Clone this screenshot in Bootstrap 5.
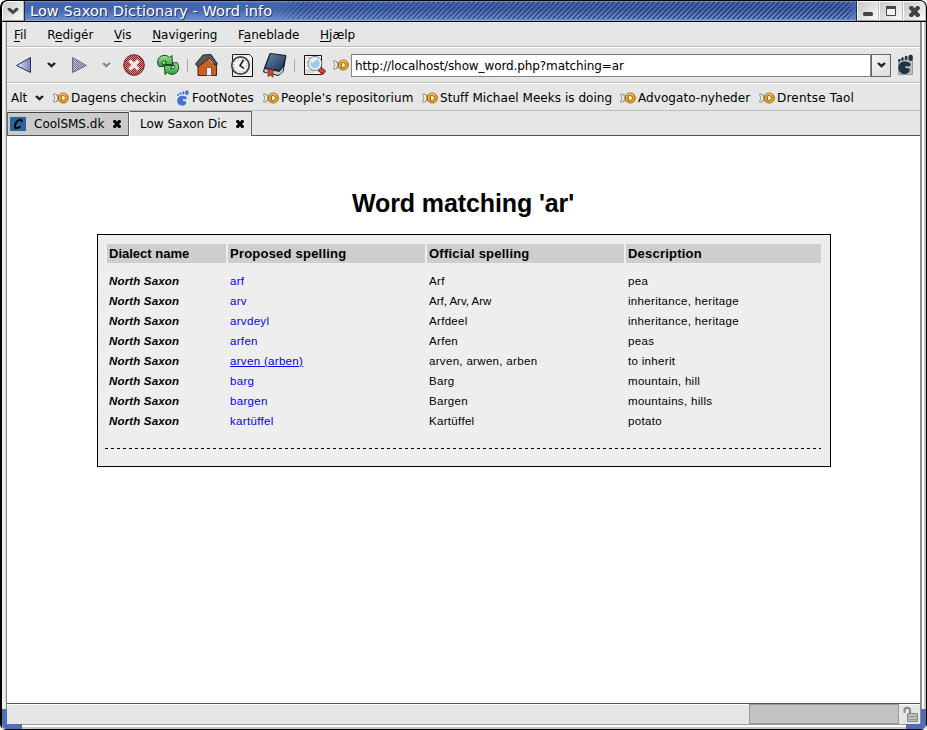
<!DOCTYPE html>
<html lang="da">
<head>
<meta charset="utf-8">
<title>Low Saxon Dictionary - Word info</title>
<link rel="stylesheet" href="https://cdn.jsdelivr.net/npm/bootstrap@5.3.0/dist/css/bootstrap.min.css">
<style>
body{width:927px;height:730px;overflow:hidden;background:#fff;font:12px/16px "DejaVu Sans",sans-serif;color:#000}
svg{display:block;flex:none}
.win{width:927px;height:730px;background:#000;border-radius:7px 7px 6px 6px;padding:1px 1px 1px 2px;overflow:hidden}
.titlebar{height:21px}
.wbtn{width:22px;height:20px;background:linear-gradient(135deg,#c9c9c9,#fafafa);border:1px solid #fff;border-right-color:#bbb;border-bottom-color:#999;flex:none}
.wbtn-menu{border-top-left-radius:6px}
.wbtn-max{width:24px}
.wbtn-close{width:23px;border-top-right-radius:6px}
.caption-area{background:linear-gradient(#7795d2 0,#4466b0 2px,#4466b0 9px,#6f8fcb 19px,#a5bce6 20px);height:20px;border-left:1px solid #1c2b50;border-right:1px solid #1c2b50}
.caption-text{font-size:14.5px;line-height:20px;color:#fff;text-shadow:1px 1px 0 #22365f;padding-left:5px;width:248px;letter-spacing:.07px}
.hatch{height:17px;margin-top:1px;background:repeating-linear-gradient(135deg,rgba(30,50,95,.75) 0,rgba(30,50,95,.75) 1px,transparent 1.6px,transparent 3.54px);-webkit-mask-image:linear-gradient(90deg,transparent,#000 30px,#000 calc(100% - 8px),transparent)}
.frame{height:707px;background:linear-gradient(90deg,#e6e6e6,#f6f6f6 2px,#ccc 4px);padding:0 5px 5px 4px;position:relative}
.inner{height:703px;background:#e6e6e6;border-left:1px solid #888;border-right:1px solid #888}
.edge-r{position:absolute;right:0;top:0;width:5px;height:100%;background:linear-gradient(90deg,#999 0 1px,#fff 1px 3px,#c4c4c4 3px 5px)}
.edge-b{position:absolute;left:0;right:0;bottom:0;height:5px;background:linear-gradient(#999 0 1px,#fff 1px 3px,#c4c4c4 3px 5px)}
.grip{position:absolute;bottom:0;width:20px;height:20px;border:solid #4c6fb8;border-width:0 0 5px 5px}
.grip-l{left:0;border-bottom-left-radius:5px}
.grip-r{right:0;border-width:0 5px 5px 0;border-bottom-right-radius:5px}
.menubar{height:25px;gap:20.6px;padding:2px 0 0 7px;border-bottom:1px solid #bdbdbd}
.menubar u{text-underline-offset:2px}
.tools{height:36px;border-top:1px solid #fff;border-bottom:1px solid #bdbdbd;padding-left:7px}
.addr{width:520px;height:23px;background:#fff;border:1px solid #858585;border-top-color:#777;padding:0 3px;letter-spacing:-.1px;line-height:22px}
.drop{width:20px;height:23px;border:1px solid #666;background:linear-gradient(135deg,#f4f4f4,#ddd);flex:none}
.marks{height:28px;border-top:1px solid #fff;border-bottom:1px solid #bdbdbd;padding:2px 0 0 4px;white-space:nowrap}
.mk{display:flex;align-items:center;gap:2px;flex:none}
.mk-alt{width:42px;gap:8px}
.mk-a{width:122px}.mk-b{width:88px;letter-spacing:.15px}.mk-c{width:159px;letter-spacing:.15px}.mk-d{width:198px;letter-spacing:.04px}.mk-e{width:139px;letter-spacing:.06px}.mk-f{letter-spacing:.22px}
.tabs{height:25px;border-bottom:1px solid #555}
.tb{border:1px solid #666;border-bottom:0;white-space:nowrap}
.tb-off{width:122px;height:23px;background:#cbcbcb;border-top-color:#444;padding-left:2px}
.tb-on{width:123px;height:25px;background:#e6e6e6;border-left:1px solid #fff;margin-bottom:-1px;padding-left:10px}
.page{height:568px;background:#fff;border-bottom:1px solid #555;font-family:"Liberation Sans",Arial,sans-serif;padding-top:50px}
.page h1{font:bold 25px/34px "Liberation Sans",Arial,sans-serif;letter-spacing:-.1px;margin:0 0 14px;padding-right:1px;height:34px}
.words{width:734px;height:233px;margin-left:90px;background:#eee;border:1px solid #000;padding:9px 9px 0 7px}
.wrow{display:grid;grid-template-columns:119px 197px 197px 195px;gap:2px;margin-left:2px;height:20px;font-size:11.5px;line-height:20px;letter-spacing:.32px}
.wrow>*{padding-left:2px}
.wrow em{font-weight:bold;letter-spacing:.16px}
.wrow .tight{letter-spacing:0}
.whead{height:19px;font-size:13px;line-height:19px;letter-spacing:.22px;font-weight:bold;margin-bottom:8px}
.whead>*{background:#cecece}
.wrow a{color:#00f;text-decoration:none}
.wrow a.hot{text-decoration:underline;text-underline-offset:1px}
.rule{height:1px;margin-top:17px;background:repeating-linear-gradient(90deg,#000 0 3px,transparent 3px 6px)}
.status{height:20px;border-top:1px solid #fff}
.prog{width:150px;height:20px;margin-top:-1px;background:#c3c3c3;border:1px solid #999}
.ico-gap{margin-left:9px}
</style>
<script src="https://cdn.jsdelivr.net/npm/bootstrap@5.3.0/dist/js/bootstrap.bundle.min.js"></script>
</head>
<body>
<svg width="0" height="0" class="position-absolute">
<symbol id="chev" viewBox="0 0 10 6"><path d="M0.5 0.8 2.5.3 5 2.5 7.5.3 9.5.8V2L5 6 .5 2z"/></symbol>
<symbol id="fish" viewBox="0 0 16 12"><path d="M.5 2h2.500L5 6l-2 4H.5L2 6z" fill="#fff" stroke="#777" stroke-width=".8"/><path d="M3.500 2.500 5.500 3 6.500 6l-1 3-2 .5L5 6z" fill="#eee" stroke="#888" stroke-width=".7"/><circle cx="10.300" cy="6" r="5" fill="#eea81c" stroke="#8a5a12" stroke-width=".9"/><path d="M7 3.500a4 4 0 0 1 6-.3" fill="none" stroke="#fbdc80"/><path d="M8.500 3.500h1.500a2.500 2.500 0 0 1 0 5H8.500z" fill="#fff2c0" stroke="#7d5418" stroke-width=".8"/></symbol>
<symbol id="foot" viewBox="0 0 16 18"><path d="M4 7.500C7 5.500 12.500 6.500 13 8.800c.2 1.800-2 2.200-3 1.700-1.200-.6-2.200.2-1.700 1.200.6 1 4 .3 4 2C12.300 16 10 17.500 7.500 17.500 2 17.500.5 10.500 4 7.500z"/><ellipse cx="13" cy="3" rx="2" ry="2.800"/><ellipse cx="9" cy="3.200" rx="1.300" ry="1.900"/><ellipse cx="5.800" cy="4" rx="1.100" ry="1.600"/><ellipse cx="3" cy="5.500" rx="1" ry="1.300"/></symbol>
<symbol id="cross" viewBox="0 0 8 8"><path d="M0 1 1 0h1.500L4 1.700 5.500 0H7l1 1v1L6 4l2 2v1L7 8H5.500L4 6.300 2.500 8H1L0 7V6l2-2-2-2z"/></symbol>
</svg>
<div class="win">
 <div class="titlebar d-flex">
  <div class="wbtn wbtn-menu d-flex align-items-center justify-content-center"><svg width="12" height="8" fill="#444"><use href="#chev"/></svg></div>
  <div class="caption-area d-flex flex-grow-1"><div class="caption-text text-nowrap">Low Saxon Dictionary - Word info</div><div class="hatch flex-grow-1"></div></div>
  <div class="wbtn d-flex justify-content-center"><svg width="10" height="18"><rect y="10" width="10" height="4" rx="1.500" fill="#444"/></svg></div>
  <div class="wbtn wbtn-max d-flex align-items-center justify-content-center"><svg width="10" height="10"><path d="M.5.5h9v9h-9z" fill="#f4f4f4" stroke="#444"/><path fill="#444" d="M0 0h10v3H0z"/></svg></div>
  <div class="wbtn wbtn-close d-flex align-items-center justify-content-center"><svg width="11" height="11" fill="#444"><use href="#cross"/></svg></div>
 </div>
 <div class="frame">
  <div class="edge-r"></div><div class="edge-b"></div><div class="grip grip-l"></div><div class="grip grip-r"></div>
  <div class="inner d-flex flex-column">
   <nav class="menubar d-flex align-items-center"><span><u>F</u>il</span><span>R<u>e</u>digér</span><span><u>V</u>is</span><span><u>N</u>avigering</span><span>F<u>a</u>neblade</span><span><u>H</u>jælp</span></nav>
   <div class="tools d-flex align-items-center">
    <svg width="337" height="26" viewBox="14 52 337 26">
     <defs>
      <linearGradient id="bl"><stop stop-color="#e4e8fb"/><stop offset="1" stop-color="#7784bd"/></linearGradient>
      <linearGradient id="gr" x2="0" y2="1"><stop stop-color="#9be39a"/><stop offset="1" stop-color="#2c9b37"/></linearGradient>
      <linearGradient id="bk" y2="1"><stop stop-color="#6386a8"/><stop offset="1" stop-color="#1c3555"/></linearGradient>
      <pattern id="ck" width="2" height="2" patternUnits="userSpaceOnUse"><path fill="#c3c9e2" d="M0 0h2v2H0z"/><path fill="#6b7186" d="M0 0h1v1H0zM1 1h1v1H1z"/></pattern>
      <pattern id="rd" width="2" height="2" patternUnits="userSpaceOnUse"><path fill="#d98a8a" d="M0 0h2v2H0z"/><path fill="#8a1c1c" d="M0 0h1v1H0zM1 1h1v1H1z"/></pattern>
     </defs>
     <path d="M16.500 65.500 30.500 57.500v15z" fill="url(#bl)" stroke="#272d4c"/>
     <use href="#chev" x="47" y="62" width="9" height="6" fill="#222"/>
     <path d="M86.500 65.500 72.500 57.500v15z" fill="url(#ck)" stroke="#686c7e"/>
     <use href="#chev" x="103" y="63" width="9" height="6" fill="#fff"/><use href="#chev" x="102" y="62" width="9" height="6" fill="#8a8a8a"/>
     <circle cx="134" cy="65" r="10.300" fill="url(#rd)" stroke="#642828"/><path d="m129.500 60.500 9 9m0-9-9 9" stroke="#f5eaea" stroke-width="3.600"/>
     <g fill="url(#gr)" stroke="#174d1c"><path d="M159 66.500c-3-4-1-10 4-11 3-.5 5 .5 6.500 2l2.500-2 .5 9h-9l3-2.500c-2-1.500-4-1-4.500 1l2 3.500z"/><path d="M177 62.500c3 4 2 10-3 11.500-3 .8-5 0-6.500-1.500l-2.500 2-.5-9h9l-3 2.500c2 1.500 4 .5 4.300-1.500l-2-3.500z"/></g>
     <path d="M187.500 59v13" stroke="#aaa"/>
     <path d="M198 64h18.500v11.500H198z" fill="#c76021" stroke="#45210d"/><path d="m201 65 7-7 6 7v10h-13z" fill="#c76021"/><path d="m195.500 64 7.500-9 8-.5 6.500 9.500-1.500 1.500-7-7.500-4 3.500-7 5.500z" fill="#5a5a5a" stroke="#222"/><path d="M206.500 67.500h5v8h-5z" fill="#eee" stroke="#855"/>
     <path d="M232.500 54.500h17l3 3v19h-20z" fill="#eee" stroke="#222"/><path d="M234 76.500h18.500V58" fill="none" stroke="#111"/><circle cx="240.500" cy="65.500" r="8.700" fill="#f4f4f4" stroke="#444" stroke-width="1.800"/><circle cx="240.500" cy="65.500" r="6.500" fill="none" stroke="#888" stroke-dasharray="1 2.400"/><path d="m243.500 60-3.500 5.500 4 3" fill="none" stroke="#111" stroke-width="1.500"/>
     <path d="m270 53.500 16 2-3 16-4.500 4-15-3.500 1-4z" fill="#17283f" stroke="#111"/><path d="m270.500 54 15 2-4.500 14-15.500-2z" fill="url(#bk)"/><path d="m264.500 69 15 3 4-5-1 5-4 3-14-3z" fill="#ccc"/><path d="M268 69.500h5v8l-2.500-2.300-2.500 1.300z" fill="#c7432a" stroke="#8a2010" stroke-width=".6"/>
     <path d="M294.500 59v13" stroke="#aaa"/>
     <path d="M304.500 55.500h17v19h-17z" fill="#f3f3f3" stroke="#111"/><path d="M306 58h4m-4 4h3m-3 4h4m-4 4h9m-9 2h8" stroke="#bbb"/><path d="m319.500 69 5 4" stroke="#711" stroke-width="5"/><path d="m319.500 69 4.500 3.500" stroke="#e34a22" stroke-width="3"/><circle cx="315" cy="63.500" r="5.800" fill="#9bcdee" stroke="#f4f4f4" stroke-width="2"/><circle cx="315" cy="63.500" r="7" fill="none" stroke="#5c7383" stroke-width=".9"/><path d="M312 62.500q1-3 4-3" stroke="#fff" stroke-width="2" fill="none"/>
     <use href="#fish" x="333" y="59" width="16" height="12"/>
    </svg>
    <div class="addr flex-shrink-0 text-nowrap">http://localhost/show_word.php?matching=ar</div>
    <div class="drop d-flex align-items-center justify-content-center"><svg width="9" height="6" fill="#222"><use href="#chev"/></svg></div>
    <svg width="19" height="22" viewBox="0 0 19 22" style="margin-left:5px"><path d="M2.500 5.500h14v15h-14z" fill="#b9bec0" stroke="#999"/><svg x="0" y="0" width="18" height="21" viewBox="0 0 16 18" fill="#1d3540"><use href="#foot"/></svg></svg>
   </div>
   <div class="marks d-flex align-items-center">
    <span class="mk mk-alt">Alt <svg width="9" height="6" fill="#222"><use href="#chev"/></svg></span>
    <span class="mk mk-a"><svg width="16" height="12"><use href="#fish"/></svg>Dagens checkin</span>
    <span class="mk mk-b"><svg width="15" height="16" fill="#4272d8"><use href="#foot"/></svg>FootNotes</span>
    <span class="mk mk-c"><svg width="16" height="12"><use href="#fish"/></svg>People's repositorium</span>
    <span class="mk mk-d"><svg width="16" height="12"><use href="#fish"/></svg>Stuff Michael Meeks is doing</span>
    <span class="mk mk-e"><svg width="16" height="12"><use href="#fish"/></svg>Advogato-nyheder</span>
    <span class="mk mk-f"><svg width="16" height="12"><use href="#fish"/></svg>Drentse Taol</span>
   </div>
   <div class="tabs d-flex align-items-end">
    <div class="tb tb-off d-flex align-items-center"><svg width="16" height="14"><path fill="#2d62a3" d="M0 0h16v14H0z"/><path d="M11.500 5c.5-3-3-3-5 0s-2 6 0 6 3-.5 4-1.500" fill="none" stroke="#000" stroke-width="2"/></svg><span class="ms-2">CoolSMS.dk</span><svg width="8" height="8" class="ico-gap"><use href="#cross"/></svg></div>
    <div class="tb tb-on d-flex align-items-center"><span>Low Saxon Dic</span><svg width="8" height="8" class="ico-gap"><use href="#cross"/></svg></div>
   </div>
   <main class="page">
    <h1 class="text-center">Word matching 'ar'</h1>
    <div class="words">
     <div class="wrow whead"><span class="tight">Dialect name</span><span>Proposed spelling</span><span>Official spelling</span><span>Description</span></div>
     <div class="wrow"><em>North Saxon</em><a href="#">arf</a><span>Arf</span><span>pea</span></div>
     <div class="wrow"><em>North Saxon</em><a href="#">arv</a><span class="tight">Arf, Arv, Arw</span><span>inheritance, heritage</span></div>
     <div class="wrow"><em>North Saxon</em><a href="#">arvdeyl</a><span>Arfdeel</span><span>inheritance, heritage</span></div>
     <div class="wrow"><em>North Saxon</em><a href="#">arfen</a><span>Arfen</span><span>peas</span></div>
     <div class="wrow"><em>North Saxon</em><span><a href="#" class="hot">arven (arben)</a></span><span>arven, arwen, arben</span><span>to inherit</span></div>
     <div class="wrow"><em>North Saxon</em><a href="#">barg</a><span>Barg</span><span>mountain, hill</span></div>
     <div class="wrow"><em>North Saxon</em><a href="#">bargen</a><span>Bargen</span><span>mountains, hills</span></div>
     <div class="wrow"><em>North Saxon</em><a href="#">kartüffel</a><span>Kartüffel</span><span>potato</span></div>
     <div class="rule"></div>
    </div>
   </main>
   <div class="status d-flex justify-content-end"><div class="prog"></div><svg width="21" height="19" viewBox="0 0 21 19"><path d="M5.500 8V5.500a2.500 2.500 0 0 1 5.500 0V9" fill="none" stroke="#888" stroke-width="2"/><path d="M8.500 8.500h10v8h-10z" fill="#bbb" stroke="#888"/><path d="M9 11.500h9m-9 3h9" stroke="#999"/></svg></div>
  </div>
 </div>
</div>
</body>
</html>
